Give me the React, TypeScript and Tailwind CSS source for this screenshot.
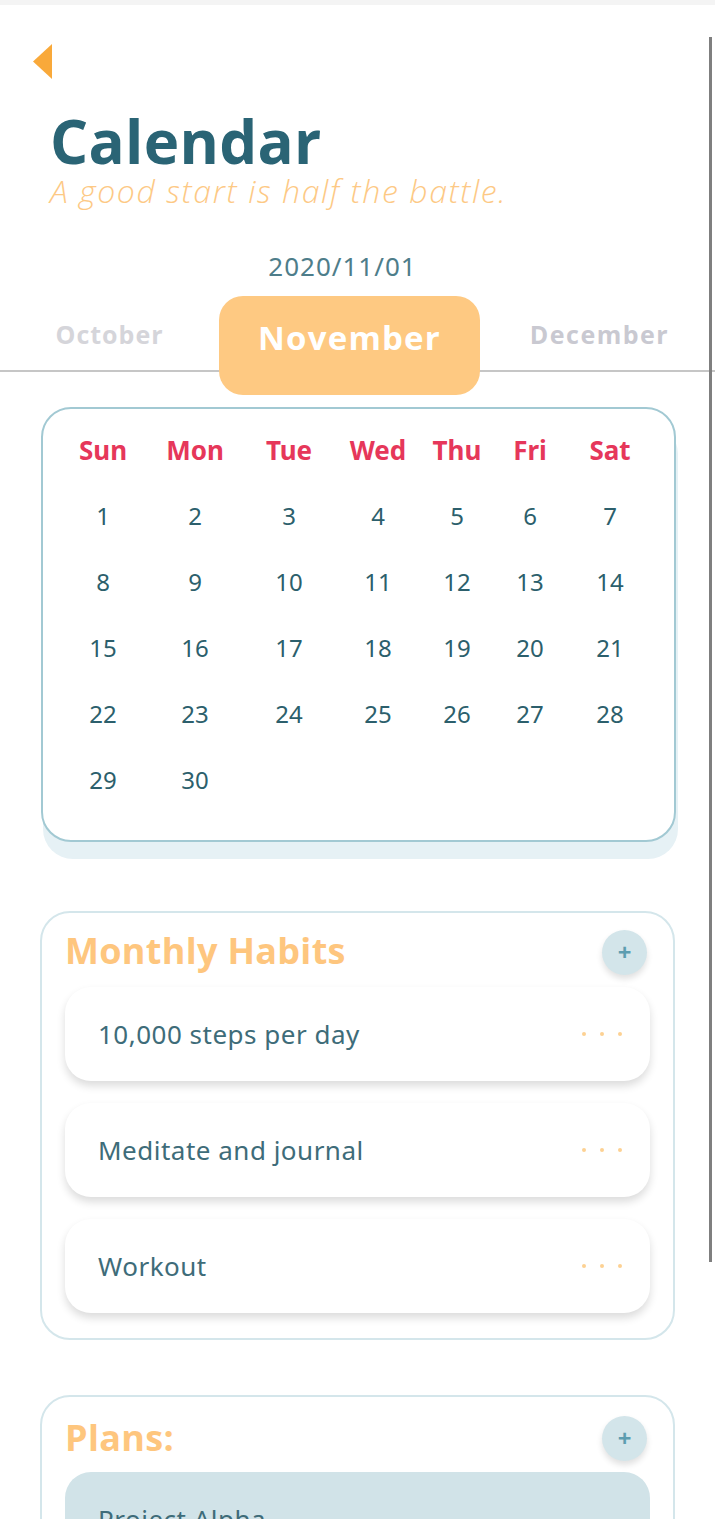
import React from 'react'

const days = ['Sun', 'Mon', 'Tue', 'Wed', 'Thu', 'Fri', 'Sat']

const weeks: (number | null)[][] = [
  [1, 2, 3, 4, 5, 6, 7],
  [8, 9, 10, 11, 12, 13, 14],
  [15, 16, 17, 18, 19, 20, 21],
  [22, 23, 24, 25, 26, 27, 28],
  [29, 30, null, null, null, null, null],
]

const habits = ['10,000 steps per day', 'Meditate and journal', 'Workout']

const head = { fontFamily: '"Open Sans", "Noto Sans", sans-serif' }
const body = { fontFamily: '"Noto Sans", "Open Sans", sans-serif' }

const PlusButton = () => (
  <button className="w-[45px] h-[45px] rounded-full bg-[#d3e5ea] shadow-[0_4px_6px_rgba(0,0,0,0.12)] flex items-center justify-center text-[#5d9db0] text-[24px] leading-none font-bold">
    +
  </button>
)

const Dots = () => (
  <span className="flex gap-[14px]">
    <span className="w-[4px] h-[4px] rounded-full bg-[#fdd193]" />
    <span className="w-[4px] h-[4px] rounded-full bg-[#fdd193]" />
    <span className="w-[4px] h-[4px] rounded-full bg-[#fdd193]" />
  </span>
)

export default function App() {
  return (
    <div className="relative w-[715px] min-h-screen bg-white overflow-hidden" style={body}>
      <div className="h-[5px] bg-[#f4f4f4]" />

      {/* back */}
      <div className="pl-[33px] pt-[39px]">
        <svg width="20" height="35" viewBox="0 0 20 35">
          <polygon points="0,17.5 19,0 19,35" fill="#f9a93a" />
        </svg>
      </div>

      <div className="pl-[50px] mt-[36px]" style={head}>
        <h1 className="text-[60px] leading-[52px] font-bold text-[#2a6475] tracking-[0.3px]">Calendar</h1>
        <p className="text-[32px] leading-[32px] italic font-light text-[#fdc985] tracking-[1.6px] mt-[8px]">A good start is half the battle.</p>
      </div>

      <div className="mt-[44px] pr-[30px] text-center text-[26px] leading-[30px] tracking-[1px] text-[#4e7d8a]">2020/11/01</div>

      {/* month tabs */}
      <div className="mt-[15px] h-[76px] border-b-2 border-[#c6c6c6] flex items-start" style={head}>
        <div className="w-[219px] pt-[20px] text-center text-[25px] tracking-[1px] font-bold text-[#d5d5da]">October</div>
        <div className="w-[261px] h-[99px] rounded-[24px] bg-[#fec982] relative z-10 pt-[17px] text-center text-[33px] tracking-[1.2px] font-bold text-white">
          November
        </div>
        <div className="w-[235px] pt-[20px] pl-[4px] text-center text-[25px] tracking-[1.5px] font-bold text-[#c9c9d1]">December</div>
      </div>

      {/* calendar */}
      <div className="ml-[41px] mt-[35px] w-[635px] border-2 border-[#a2c9d3] rounded-[30px] bg-white shadow-[2px_17px_0_0_#e6f1f5] pt-[8px] pb-[27px] pl-[15px]">
        <div className="grid grid-cols-[90px_94px_94px_84px_74px_72px_88px] h-[66px] items-center">
          {days.map((d) => (
            <div key={d} className="text-center text-[26px] font-bold text-[#e6375a]">{d}</div>
          ))}
        </div>
        {weeks.map((w, i) => (
          <div key={i} className="grid grid-cols-[90px_94px_94px_84px_74px_72px_88px] h-[66px] items-center">
            {w.map((n, j) => (
              <div key={j} className="text-center text-[24px] text-[#2c5f6c]">{n ?? ''}</div>
            ))}
          </div>
        ))}
      </div>

      {/* monthly habits */}
      <div className="ml-[40px] mt-[69px] w-[635px] border-2 border-[#d4e6eb] rounded-[30px] px-[23px] pt-[16px] pb-[25px]">
        <div className="flex items-center justify-between h-[46px] pr-[3px]">
          <h2 className="text-[36px] font-bold text-[#fec67e] tracking-[0.3px] -mt-[2px]" style={head}>Monthly Habits</h2>
          <PlusButton />
        </div>
        <div className="mt-[12px] flex flex-col gap-[22px]">
          {habits.map((h) => (
            <div key={h} className="h-[94px] rounded-[26px] bg-white shadow-[0_5px_8px_rgba(0,0,0,0.14)] flex items-center justify-between pl-[33px] pr-[28px]">
              <span className="text-[26px] tracking-[0.5px] text-[#3e6c79]">{h}</span>
              <Dots />
            </div>
          ))}
        </div>
      </div>

      {/* plans */}
      <div className="ml-[40px] mt-[55px] w-[635px] border-2 border-[#d4e6eb] rounded-[30px] px-[23px] pt-[18px] pb-[25px]">
        <div className="flex items-center justify-between h-[46px] pr-[3px]">
          <h2 className="text-[36px] font-bold text-[#fec67e] tracking-[0.3px]" style={head}>Plans:</h2>
          <PlusButton />
        </div>
        <div className="mt-[11px] flex flex-col gap-[22px]">
          <div className="h-[94px] rounded-[26px] bg-[#d1e3e8] flex items-center pl-[33px]">
            <span className="text-[26px] tracking-[0.5px] text-[#3e6c79]">Project Alpha</span>
          </div>
        </div>
      </div>

      {/* scrollbar */}
      <div className="absolute top-[37px] right-[3px] w-[3px] h-[1225px] bg-[#7f7f7f]" />
    </div>
  )
}
